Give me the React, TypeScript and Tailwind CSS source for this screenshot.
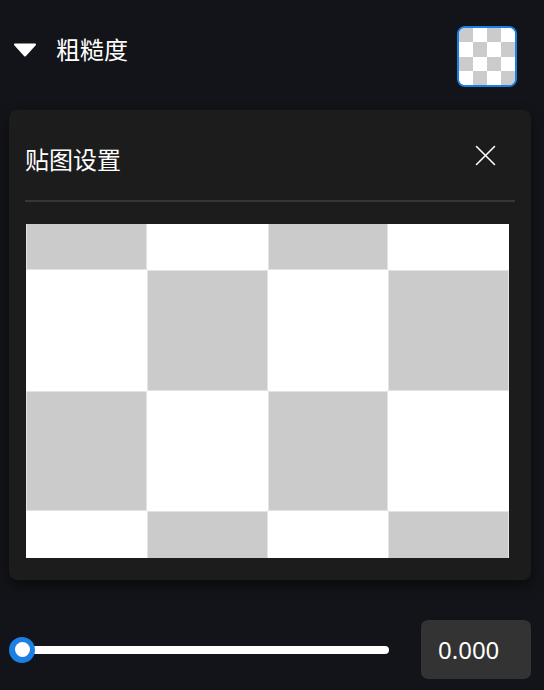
import React from "react";

const font = { fontFamily: '"Noto Sans", "Noto Sans CJK SC", sans-serif' };

const Checker = ({ cell, seam }: { cell: string; seam?: boolean }) => {
  const cells = Array.from({ length: 16 }, (_, i) => {
    const r = Math.floor(i / 4);
    const c = i % 4;
    const gray = (r + c) % 2 === 0;
    return (
      <div
        key={i}
        className={
          gray
            ? seam
              ? "bg-[#cbcbcb] border border-[#e4e4e4]"
              : "bg-[#cbcbcb]"
            : "bg-white"
        }
      />
    );
  });
  return <div className={`grid grid-cols-4 grid-rows-4 ${cell}`}>{cells}</div>;
};

export default function App() {
  return (
    <div className="w-[544px] h-[690px] bg-[#131419] overflow-hidden" style={font}>
      {/* header */}
      <div className="flex items-start justify-between pt-[26px] pl-[13px] pr-[27px]">
        <div className="flex items-center h-[48px] gap-[19px]">
          <svg width="24" height="14" viewBox="0 0 24 14">
            <path d="M2 1.5 L22 1.5 L12 12.5 Z" fill="white" stroke="white" strokeWidth="2" strokeLinejoin="round" />
          </svg>
          <span className="text-white text-[24px] leading-[32px]">粗糙度</span>
        </div>
        <div className="w-[60px] h-[61px] rounded-[8px] border-2 border-[#1b7fe3] overflow-hidden bg-white">
          <Checker cell="w-[56px] h-[57px]" />
        </div>
      </div>

      {/* panel */}
      <div className="ml-[9px] mt-[23px] w-[522px] rounded-[8px] bg-[#1c1c1c] px-[16px] pb-[22px] shadow-[0_6px_14px_rgba(0,0,0,0.45)]">
        <div className="flex items-start justify-between pt-[34px]">
          <span className="text-white text-[24px] leading-[32px]">贴图设置</span>
          <svg width="21" height="21" viewBox="0 0 21 21" className="mt-[1px] mr-[19px]">
            <path d="M1.5 1.5 L19.5 19.5 M19.5 1.5 L1.5 19.5" stroke="white" strokeWidth="1.6" strokeLinecap="round" />
          </svg>
        </div>
        <div className="mt-[24px] h-[2px] bg-[#363636]" />
        <div className="mt-[22px] ml-[1px] w-[483px] h-[334px] overflow-hidden">
          <div className="-mt-[75px]">
            <Checker cell="w-[483px] h-[483px]" seam />
          </div>
        </div>
      </div>

      {/* slider row */}
      <div className="flex items-center justify-between mt-[40px] pl-[9px] pr-[13px]">
        <div className="relative w-[380px] h-[26px]">
          <div className="absolute left-[13px] right-0 top-[9px] h-[8px] rounded-full bg-white" />
          <div className="absolute left-0 top-0 w-[26px] h-[26px] rounded-full bg-[#1b7fe3] flex items-center justify-center">
            <div className="w-[15px] h-[15px] rounded-full bg-white" />
          </div>
        </div>
        <div className="w-[110px] h-[59px] rounded-[7px] bg-[#333333] flex items-center pl-[17px]">
          <span className="text-white text-[24px] leading-none">0.000</span>
        </div>
      </div>
    </div>
  );
}
